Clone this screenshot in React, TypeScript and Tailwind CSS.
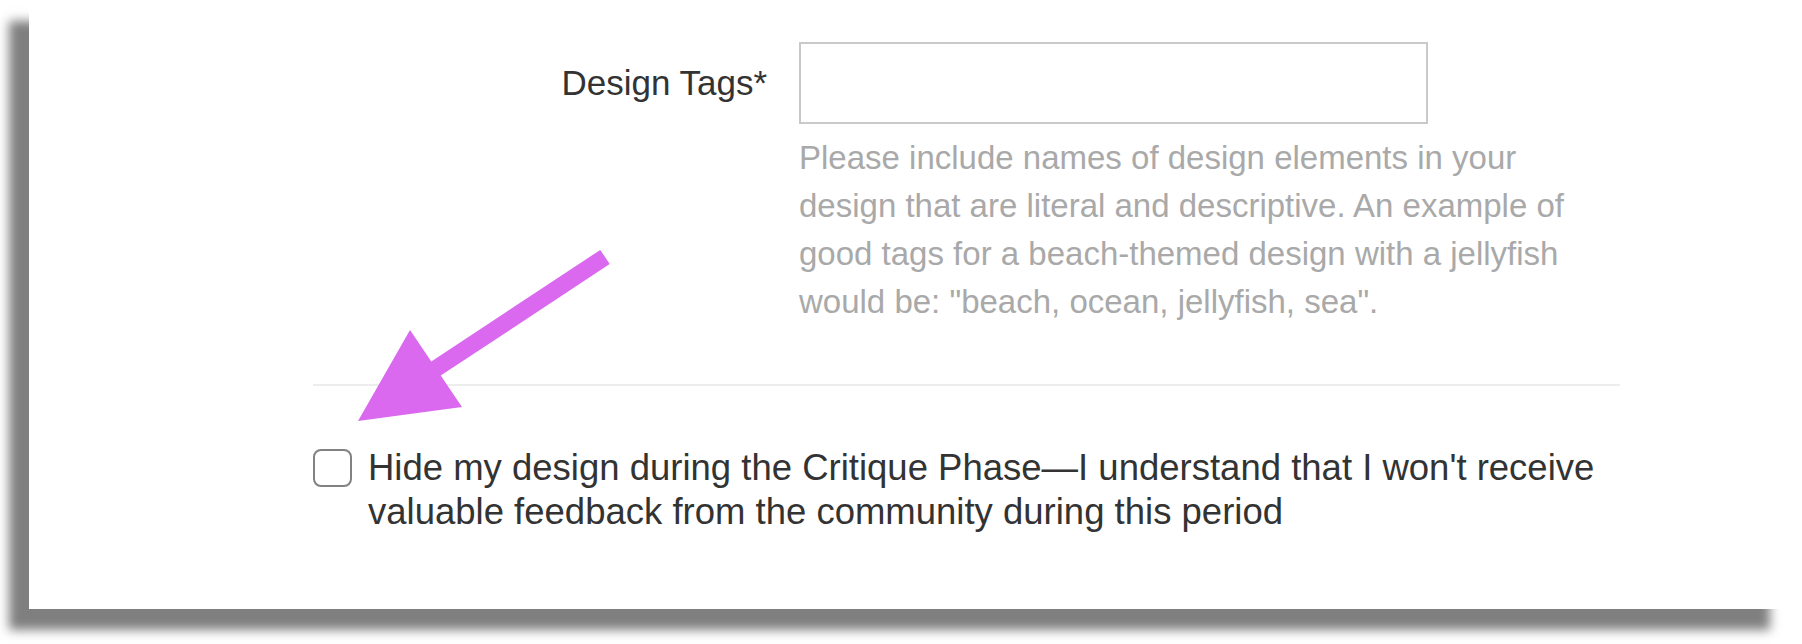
import React from 'react';

const font = { fontFamily: '"Liberation Sans", Arial, Helvetica, sans-serif' };

// pink annotation arrow drawn over the form
const Arrow: React.FC = () => (
  <svg
    className="pointer-events-none absolute left-0 top-0"
    width="1802"
    height="644"
    viewBox="0 0 1802 644"
  >
    <polygon
      points="609.7,264.1 440.7,375.6 462,407 358,421 410,330 431.3,361.4 600.3,249.9"
      fill="#da69f0"
    />
  </svg>
);

const App: React.FC = () => {
  return (
    <div className="relative h-[644px] w-full overflow-hidden bg-white" style={font}>
      <div className="ml-[29px] h-[609px] w-[1761px] bg-white pl-[284px] pt-[42px] shadow-[-20px_21px_10px_rgba(0,0,0,0.5)]">
        <div className="w-[1307px]">
          <div className="flex gap-[32px]">
            <div className="flex h-[82px] w-[454px] items-center justify-end text-[35px] text-[#333333]">
              Design Tags*
            </div>
            <div className="w-[629px]">
              <input
                type="text"
                className="block h-[82px] w-[629px] border-2 border-[#c9c9c9] bg-white outline-none"
              />
              <p className="mt-[10px] w-[800px] text-[33px] leading-[48px] text-[#a9a9a9]">
                Please include names of design elements in your design that are literal and
                descriptive. An example of good tags for a beach-themed design with a jellyfish
                would be: "beach, ocean, jellyfish, sea".
              </p>
            </div>
          </div>

          <div className="mt-[58px] h-[2px] w-full bg-[#ededed]" />

          <label className="mt-[60px] flex items-start gap-[16px]">
            <span className="mt-[2.5px] block h-[38px] w-[39px] shrink-0 rounded-[8px] border-[2.5px] border-[#828282] bg-white" />
            <span className="text-[36.5px] leading-[44px] text-[#333333]">
              Hide my design during the Critique Phase—I understand that I won't receive
              valuable feedback from the community during this period
            </span>
          </label>
        </div>
      </div>
      <Arrow />
    </div>
  );
};

export default App;
